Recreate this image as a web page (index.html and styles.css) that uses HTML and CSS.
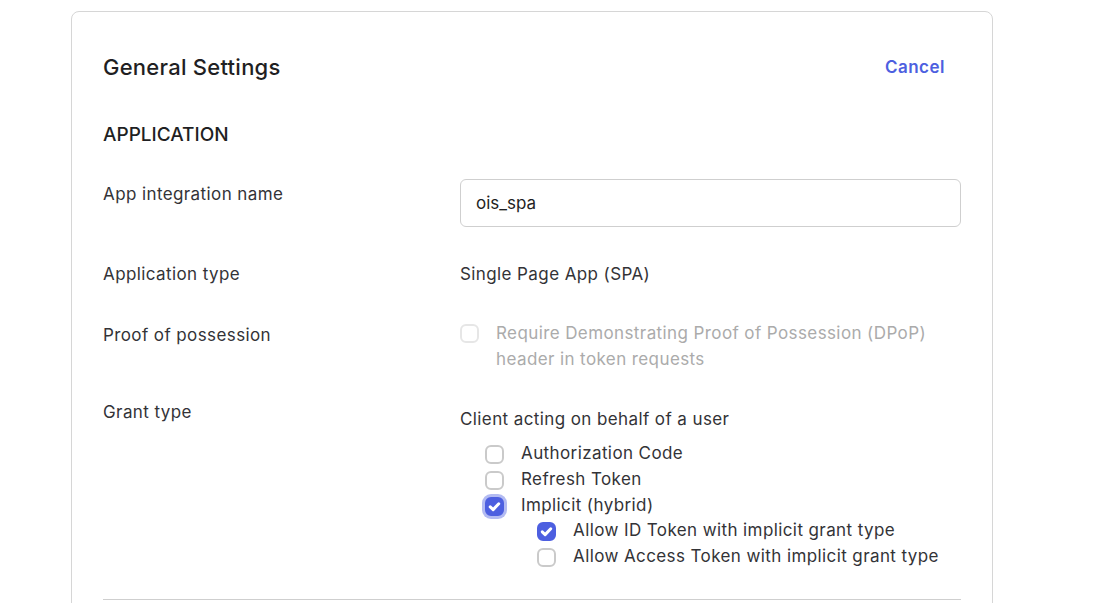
FILE: index.html
```html
<!DOCTYPE html>
<html lang="en">
<head>
  <meta charset="UTF-8" />
  <title>General Settings</title>
  <meta name="viewport" content="width=device-width, initial-scale=1" />
  <link rel="stylesheet" href="styles.css">
</head>
<body>
  <div class="card">
    <div class="card-head">
      <h1>General Settings</h1>
      <a class="cancel" href="#">Cancel</a>
    </div>
    <h2>APPLICATION</h2>

    <div class="row row-input">
      <div class="label">App integration name</div>
      <div class="field"><input type="text" value="ois_spa" /></div>
    </div>

    <div class="row row-type">
      <div class="label">Application type</div>
      <div class="field">Single Page App (SPA)</div>
    </div>

    <div class="row row-proof">
      <div class="label">Proof of possession</div>
      <div class="field">
        <label class="check disabled">
          <span class="box"></span>
          <span>Require Demonstrating Proof of Possession (DPoP)<br />header in token requests</span>
        </label>
      </div>
    </div>

    <div class="row row-grant">
      <div class="label">Grant type</div>
      <div class="field">
        <div class="group-title">Client acting on behalf of a user</div>
        <div class="checks">
          <label class="check"><span class="box"></span><span>Authorization Code</span></label>
          <label class="check"><span class="box"></span><span>Refresh Token</span></label>
          <label class="check"><span class="box on focus"><svg viewBox="0 0 12 12"><path d="M2.6 6.3l2.3 2.2 4.5-4.7" /></svg></span><span>Implicit (hybrid)</span></label>
          <div class="sub">
            <label class="check"><span class="box on"><svg viewBox="0 0 12 12"><path d="M2.6 6.3l2.3 2.2 4.5-4.7" /></svg></span><span>Allow ID Token with implicit grant type</span></label>
            <label class="check"><span class="box"></span><span>Allow Access Token with implicit grant type</span></label>
          </div>
        </div>
      </div>
    </div>

    <hr class="divider" />
  </div>
</body>
</html>
```

FILE: styles.css
```css
body { margin: 0; padding: 0; background: #fff; font-family: Inter, "Noto Sans", sans-serif; color: #333337; font-size: 17px; letter-spacing: 0.4px; }
.card { margin: 11px 0 0 71px; width: 922px; height: 640px; border: 1px solid #d6d6d6; border-radius: 8px; padding: 0 31px; box-sizing: border-box; }
.card-head { display: flex; justify-content: space-between; align-items: center; padding-top: 39px; height: 32px; box-sizing: content-box; }
h1 { margin: 0; font-size: 22px; font-weight: 500; line-height: 32px; color: #1f1f23; letter-spacing: 0.25px; }
.cancel { color: #4d5fe0; font-weight: 600; font-size: 17px; letter-spacing: 0.5px; text-decoration: none; margin-right: 16px; }
h2 { margin: 40px 0 0; font-size: 19px; font-weight: 500; line-height: 24px; color: #1f1f23; letter-spacing: 0; }
.row { display: grid; grid-template-columns: 357px 1fr; margin-top: 33px; line-height: 26px; }
.row-input { margin-top: 32px; }
.row-input .label { padding-top: 2px; }
.row-type { margin-top: 34px; }
.field input { width: 100%; height: 48px; box-sizing: border-box; border: 1px solid #cfcfcf; border-radius: 6px; padding: 0 15px; font: inherit; color: #1f1f23; outline: none; }
.row-proof .label { padding-top: 2px; }
.row-grant { margin-top: 27px; }
.row-grant .field { padding-top: 7px; }
.checks { margin-top: 9px; padding-left: 25px; line-height: 25.8px; }
.sub { padding-left: 52px; }
.check { display: flex; align-items: flex-start; gap: 17px; }
.box { flex: none; width: 19px; height: 19px; margin-top: 4px; box-sizing: border-box; border: 2px solid #cacaca; border-radius: 6px; background: #fff; display: flex; align-items: center; justify-content: center; }
.box svg { width: 15px; height: 15px; fill: none; stroke: #fff; stroke-width: 2.4; stroke-linecap: round; stroke-linejoin: round; }
.box.on { background: #4d5fe0; border-color: #4d5fe0; }
.box.focus { box-shadow: 0 0 0 3px #b3bbf2; }
.disabled { color: #ababab; }
.disabled .box { border-color: #e6e6e6; }
.divider { margin: 29px 0 0; border: none; border-top: 1px solid #cfcfcf; }
```
